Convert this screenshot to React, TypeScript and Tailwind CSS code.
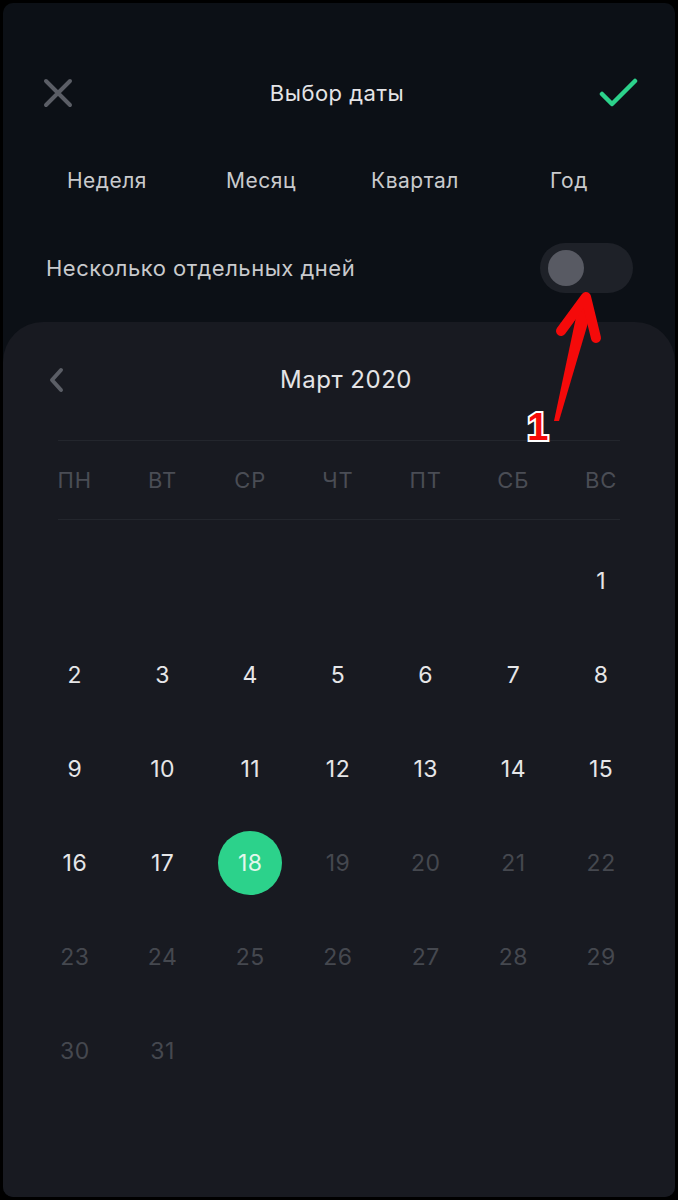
import React from "react";

const tabs = ["Неделя", "Месяц", "Квартал", "Год"];
const weekdays = ["ПН", "ВТ", "СР", "ЧТ", "ПТ", "СБ", "ВС"];
const TODAY = 18;

// March 2020 starts on Sunday -> 6 empty cells
const cells: (number | null)[] = [
  ...Array(6).fill(null),
  ...Array.from({ length: 31 }, (_, i) => i + 1),
];

function DayCell({ day }: { day: number | null }) {
  if (day === null) return <div className="h-[94px]" />;
  const isToday = day === TODAY;
  const isFuture = day > TODAY;
  return (
    <div className="h-[94px] flex items-center justify-center">
      {isToday ? (
        <div className="w-[64px] h-[64px] rounded-full bg-[#2cd28b] flex items-center justify-center text-[#e3f7ec]">
          {day}
        </div>
      ) : (
        <span className={isFuture ? "text-[#45484f]" : "text-[#e6e6e8]"}>{day}</span>
      )}
    </div>
  );
}

function Annotation() {
  return (
    <svg className="absolute inset-0 pointer-events-none" width="678" height="1200" viewBox="0 0 678 1200">
      {/* arrow shaft, tapered */}
      <polygon points="554,421 559,421 593,306 579,303" fill="#f50a0a" />
      {/* arrow head */}
      <path d="M561,331 L586,297 L596,338" fill="none" stroke="#f50a0a" strokeWidth="10" strokeLinecap="round" strokeLinejoin="round" />
      <text
        x="538"
        y="440"
        textAnchor="middle"
        fontFamily="'Liberation Sans', Arial, sans-serif"
        fontWeight="bold"
        fontSize="38"
        fill="#f50a0a"
        stroke="#ffffff"
        strokeWidth="4"
        paintOrder="stroke"
      >
        1
      </text>
    </svg>
  );
}

export default function App() {
  return (
    <div className="relative w-[678px] h-[1200px] bg-black p-[3px] font-['Inter',sans-serif] tracking-[0.5px]">
      <div className="w-full h-full rounded-[10px] bg-[#0c1016] overflow-hidden flex flex-col">
        {/* Header */}
        <div className="mt-[60px] h-[60px] flex items-center justify-between pl-[38px] pr-[36px]">
          <svg width="34" height="34" viewBox="0 0 34 34">
            <path d="M5 5 L29 29 M29 5 L5 29" stroke="#5b5e66" strokeWidth="4" strokeLinecap="round" />
          </svg>
          <h1 className="text-[#e4e4e6] text-[22px]">Выбор даты</h1>
          <svg width="40" height="32" viewBox="0 0 40 32">
            <path d="M3 17 L13 27 L36 4" fill="none" stroke="#2cd28b" strokeWidth="4.5" strokeLinecap="round" strokeLinejoin="round" />
          </svg>
        </div>

        {/* Period tabs */}
        <div className="mt-[30px] h-[56px] ml-[27px] w-[616px] grid grid-cols-4">
          {tabs.map((t) => (
            <button key={t} className="flex items-center justify-center text-[#c9cacd] text-[21px]">
              {t}
            </button>
          ))}
        </div>

        {/* Multi-day switch */}
        <div className="mt-[34px] h-[50px] flex items-center justify-between pl-[43px] pr-[42px]">
          <span className="text-[#c9cacd] text-[22px]">Несколько отдельных дней</span>
          <div className="w-[93px] h-[50px] rounded-full bg-[#1e2128] flex items-center pl-[8px]">
            <div className="w-[36px] h-[36px] rounded-full bg-[#585a63]" />
          </div>
        </div>

        {/* Calendar panel */}
        <div className="mt-[29px] flex-1 bg-[#181a21] rounded-t-[40px]">
          <div className="mt-[28px] h-[60px] flex items-center pl-[45px] pr-[47px]">
            <svg width="16" height="26" viewBox="0 0 16 26">
              <path d="M13 3 L4 13 L13 23" fill="none" stroke="#5b5e66" strokeWidth="4" strokeLinecap="round" strokeLinejoin="round" />
            </svg>
            <h2 className="flex-1 text-center text-[#e4e4e6] text-[24px]">Март 2020</h2>
          </div>

          <div className="mt-[30px] ml-[55px] w-[562px] border-t border-[#23262d]" />
          <div className="h-[78px] ml-[28px] w-[614px] grid grid-cols-7">
            {weekdays.map((w) => (
              <div key={w} className="flex items-center justify-center text-[#4a4d55] text-[22px] tracking-[1px]">
                {w}
              </div>
            ))}
          </div>
          <div className="ml-[55px] w-[562px] border-t border-[#23262d]" />

          <div className="mt-[14px] ml-[28px] w-[614px] grid grid-cols-7 text-[23px]">
            {cells.map((d, i) => (
              <DayCell key={i} day={d} />
            ))}
          </div>
        </div>
      </div>
      <Annotation />
    </div>
  );
}
